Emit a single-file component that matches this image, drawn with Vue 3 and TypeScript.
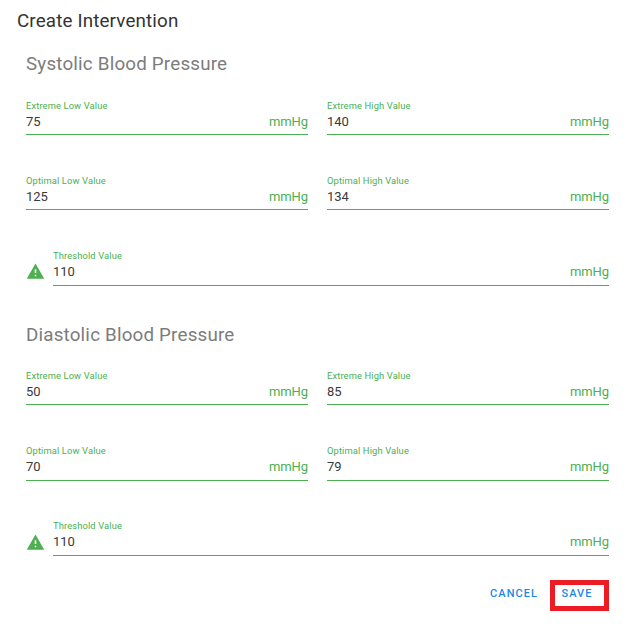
<script setup lang="ts">
interface Field { label: string; value: string; tall?: boolean }
interface Section { title: string; fields: Field[]; threshold: Field }

const sections: Section[] = [
  {
    title: 'Systolic Blood Pressure',
    fields: [
      { label: 'Extreme Low Value', value: '75' },
      { label: 'Extreme High Value', value: '140' },
      { label: 'Optimal Low Value', value: '125' },
      { label: 'Optimal High Value', value: '134' },
    ],
    threshold: { label: 'Threshold Value', value: '110' },
  },
  {
    title: 'Diastolic Blood Pressure',
    fields: [
      { label: 'Extreme Low Value', value: '50' },
      { label: 'Extreme High Value', value: '85' },
      { label: 'Optimal Low Value', value: '70', tall: true },
      { label: 'Optimal High Value', value: '79', tall: true },
    ],
    threshold: { label: 'Threshold Value', value: '110' },
  },
]
</script>

<template>
  <main class="dialog">
    <h1 class="title">Create Intervention</h1>
    <section v-for="section in sections" :key="section.title" class="section">
      <h2 class="heading">{{ section.title }}</h2>
      <div class="grid">
        <div v-for="field in section.fields" :key="field.label" class="field" :class="{ tall: field.tall }">
          <span class="label">{{ field.label }}</span>
          <div class="line"><span class="value">{{ field.value }}</span><span class="unit">mmHg</span></div>
        </div>
      </div>
      <div class="threshold">
        <svg class="alert" viewBox="0 0 24 24"><path d="M13 14h-2V9h2m0 9h-2v-2h2M1 21h22L12 2 1 21z" /></svg>
        <div class="field tall">
          <span class="label">{{ section.threshold.label }}</span>
          <div class="line"><span class="value">{{ section.threshold.value }}</span><span class="unit">mmHg</span></div>
        </div>
      </div>
    </section>
    <footer class="actions">
      <button class="btn cancel" type="button">CANCEL</button>
      <button class="btn save" type="button">SAVE</button>
    </footer>
  </main>
</template>

<style>
body { background: #fff; }
</style>

<style scoped>
.dialog {
  box-sizing: border-box;
  width: 633px;
  height: 630px;
  padding: 9px 24px 0 17px;
  font-family: Roboto, sans-serif;
  overflow: hidden;
}
.title { margin: 0; font-size: 18.8px; line-height: 25px; font-weight: 400; letter-spacing: 0.15px; color: #333; }
.section { height: 270px; padding-left: 9px; padding-top: 18px; box-sizing: border-box; }
.section + .section { padding-top: 19px; height: 269px; }
.heading { margin: 0; height: 47px; font-size: 18.8px; line-height: 25px; font-weight: 400; letter-spacing: 0.19px; color: #7c7c7c; }
.section + .section .heading { height: 46px; }
.grid { display: grid; grid-template-columns: 282px 282px; column-gap: 19px; grid-auto-rows: 75px; }
.field { box-sizing: border-box; height: 36px; border-bottom: 1px solid #4caf50; }
.field.tall { height: 37px; }
.label { display: block; font-size: 9.4px; line-height: 13px; letter-spacing: 0.11px; color: #4caf50; white-space: nowrap; }
.line { display: flex; justify-content: space-between; align-items: center; height: 19px; font-size: 13px; }
.value { color: #3a3a3a; }
.unit { color: #4caf50; letter-spacing: -0.1px; }
.threshold { display: flex; }
.threshold .field { flex: 1; }
.alert { width: 19px; height: 19px; margin: 13px 8px 0 0; fill: #4caf50; }
.section + .section .alert { margin-top: 14px; }
.actions { display: flex; justify-content: flex-end; align-items: flex-start; height: 32px; margin-top: 7px; }
.btn { box-sizing: border-box; border: 0; background: none; font: 500 11px/14px Roboto, sans-serif; letter-spacing: 1.05px; color: #1e88e5; }
.cancel { margin-right: 12px; padding: 7px 0 0; }
.save { width: 59px; height: 31px; padding: 0 5px 4px 0; border: 5px solid #ed1c24; }
</style>
